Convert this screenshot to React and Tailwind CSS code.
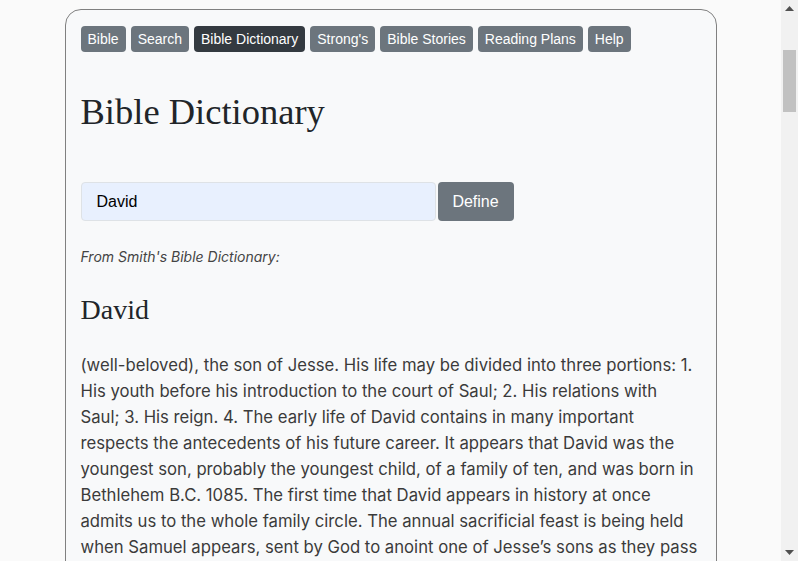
import React, { useState } from "react";

const navItems = [
  "Bible",
  "Search",
  "Bible Dictionary",
  "Strong's",
  "Bible Stories",
  "Reading Plans",
  "Help",
];

const entry = [
  "(well-beloved), the son of Jesse. His life may be divided into three portions: 1. His youth before his introduction to the court of Saul; 2. His relations with Saul; 3. His reign. 4. The early life of David contains in many important respects the antecedents of his future career. It appears that David was the youngest son, probably the youngest child, of a family of ten, and was born in Bethlehem B.C. 1085. The first time that David appears in history at once admits us to the whole family circle. The annual sacrificial feast is being held when Samuel appears, sent by God to anoint one of Jesse\u2019s sons as they pass before him, \u201cJesse made seven of his sons to pass before Samuel.\u201d Samuel said unto Jesse, \u201cAre here all thy children?\u201d And he said, \u201cThere remaineth yet the youngest, and, behold, he keepeth the sheep.\u201d He was brought in. He was of short stature, with red or auburn hair, such as is not unfrequently seen in his countrymen of the East at the present day. In later life he wore a beard. His bright eyes are specially mentioned, and generally he was remarkable for the grace of his figure and countenance, well made, and of immense strength and agility. His swiftness and activity made him like a wild gazelle, his feet like harts\u2019 feet, and his arms strong enough to break a bow of steel.",
  "After the anointing David resumed his usual occupations, but the secret of his destiny was not forgotten. Saul, troubled by an evil spirit, sought a man who could play well upon the harp, and one of the servants named David, the son of Jesse the Bethlehemite. So David came to Saul, and stood before him, and he loved him greatly; and he became his armor-bearer. Whenever the evil spirit came upon Saul, David took the harp and played with his hand, so Saul was refreshed and was well.",
  "2. Relations with Saul. The war with the Philistines followed, and the combat with Goliath, the giant of Gath, which first brought David into public notice. The victory over the champion was the turning-point of David\u2019s career. Saul inquired his parentage, and took him finally to his court. Jonathan was inspired by the romantic friendship which bound the two youths together to the end of their lives.",
  "3. David\u2019s reign. (a) As king of Judah at Hebron, seven and a half years. (b) As king of Israel. The first act of the new king was to capture Jerusalem, the stronghold of the Jebusites, which thenceforward became the capital of the kingdom, the city of David. He died at the age of seventy, having reigned forty years, and was buried in the city of David.",
];

// browser-style scrollbar column on the right edge
const ScrollBar = () => (
  <div className="flex h-screen w-[17px] shrink-0 flex-col bg-[#f1f1f1]">
    <div className="flex h-[17px] items-center justify-center">
      <svg width="9" height="5" viewBox="0 0 9 5">
        <path d="M0 5 L4.5 0 L9 5 Z" fill="#505050" />
      </svg>
    </div>
    <div className="flex-1 px-[2px] pt-[33px]">
      <div className="h-[62px] bg-[#c1c1c1]" />
    </div>
    <div className="flex h-[17px] items-center justify-center">
      <svg width="9" height="5" viewBox="0 0 9 5">
        <path d="M0 0 L9 0 L4.5 5 Z" fill="#505050" />
      </svg>
    </div>
  </div>
);

const App = () => {
  const [word, setWord] = useState("David");

  return (
    <div className="flex h-screen overflow-hidden bg-[#fafafa] font-['Inter',sans-serif]">
      <div className="h-screen flex-1 overflow-hidden pt-[9px]">
        <div className="mx-auto w-[652px] rounded-2xl border border-[#808080] bg-[#f8f9fa] px-[15px] pt-[16px] pb-8">
          {/* nav */}
          <div className="flex flex-wrap gap-[5px] font-['Liberation_Sans',Arial,sans-serif]">
            {navItems.map((item) => (
              <button
                key={item}
                className={
                  item === "Bible Dictionary"
                    ? "rounded px-[7px] pt-[4px] pb-[4px] text-[14px] leading-[18px] text-white bg-[#343a40]"
                    : "rounded px-[7px] pt-[4px] pb-[4px] text-[14px] leading-[18px] text-white bg-[#6c757d]"
                }
              >
                {item}
              </button>
            ))}
          </div>

          <h1 className="mt-[38px] font-['Liberation_Serif',serif] text-[36.5px] leading-[43px] text-[#212529]">
            Bible Dictionary
          </h1>

          {/* search */}
          <div className="mt-[49px] flex gap-[2px] font-['Liberation_Sans',Arial,sans-serif]">
            <input
              className="h-[39px] w-[355px] rounded border border-[#dee2e6] bg-[#e8f0fe] pl-[15px] text-[16px] text-black outline-none"
              value={word}
              onChange={(e) => setWord(e.target.value)}
            />
            <button className="h-[39px] w-[76px] rounded bg-[#6c757d] text-[16px] text-white">
              Define
            </button>
          </div>

          <p className="mt-[26px] text-[14px] italic leading-[20px] text-[#444]">
            From Smith's Bible Dictionary:
          </p>

          <h2 className="mt-[26px] font-['Liberation_Serif',serif] text-[28px] leading-[34px] text-[#212529]">
            David
          </h2>

          <div className="mt-[25px] space-y-4 text-[16.7px] leading-[26px] text-[#3b3b3b]">
            {entry.map((para, i) => (
              <p key={i}>{para}</p>
            ))}
          </div>
        </div>
      </div>
      <ScrollBar />
    </div>
  );
};

export default App;
